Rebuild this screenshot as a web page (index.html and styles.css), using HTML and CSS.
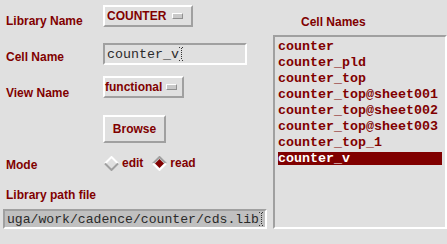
FILE: index.html
```html
<!DOCTYPE html>
<html lang="en">
<head>
  <meta charset="UTF-8" />
  <title>Open File</title>
  <link rel="stylesheet" href="styles.css">
</head>
<body>

  <div class="dialog">
    <div class="form">
      <div class="row row-lib">
        <span class="label">Library Name</span>
        <div class="menubtn menubtn-lib"><span>COUNTER</span><i class="indicator"></i></div>
      </div>

      <div class="row row-cell">
        <span class="label">Cell Name</span>
        <div class="entry">
          <span>counter_v</span>
          <svg class="caret" width="5" height="14" viewBox="0 0 5 14"><path d="M0 0.5h2M3 0.5h2M2.5 1v12M0 13.5h2M3 13.5h2" stroke="#333" stroke-width="1" stroke-dasharray="1 1" fill="none"/></svg>
        </div>
      </div>

      <div class="row row-view">
        <span class="label">View Name</span>
        <div class="menubtn menubtn-view"><span>functional</span><i class="indicator"></i></div>
      </div>

      <div class="row row-browse">
        <button class="btn">Browse</button>
      </div>

      <div class="row row-mode">
        <span class="label">Mode</span>
        <div class="radios">
          <svg class="radio" width="15" height="15" viewBox="0 0 15 15">
            <polyline points="1,7.5 7.5,1 14,7.5" stroke="#fff" stroke-width="2" fill="none"/>
            <polyline points="1,7.5 7.5,14 14,7.5" stroke="#a0a0a0" stroke-width="2" fill="none"/>
          </svg>
          <span class="radio-text">edit</span>
          <svg class="radio radio-on" width="15" height="15" viewBox="0 0 15 15">
            <polygon points="7.5,3 12,7.5 7.5,12 3,7.5" fill="#800000"/>
            <polyline points="1,7.5 7.5,1 14,7.5" stroke="#a0a0a0" stroke-width="2" fill="none"/>
            <polyline points="1,7.5 7.5,14 14,7.5" stroke="#fff" stroke-width="2" fill="none"/>
          </svg>
          <span class="radio-text">read</span>
        </div>
      </div>

      <div class="path-label label">Library path file</div>
      <div class="pathfield">
        <span>/home/user/juga/work/cadence/counter/cds.lib</span>
        <svg class="caret" width="5" height="14" viewBox="0 0 5 14"><path d="M0 0.5h2M3 0.5h2M2.5 1v12M0 13.5h2M3 13.5h2" stroke="#333" stroke-width="1" stroke-dasharray="1 1" fill="none"/></svg>
      </div>
    </div>

    <div class="cells">
      <div class="cells-title">Cell Names</div>
      <ul class="listbox">
        <li>counter</li>
        <li>counter_pld</li>
        <li>counter_top</li>
        <li>counter_top@sheet001</li>
        <li>counter_top@sheet002</li>
        <li>counter_top@sheet003</li>
        <li>counter_top_1</li>
        <li class="selected">counter_v</li>
      </ul>
    </div>
  </div>

</body>
</html>
```

FILE: styles.css
```css
body {
  margin: 0;
  background: #e0e0e0;
  font-family: "Liberation Sans", Arial, sans-serif;
  width: 447px;
  height: 244px;
  overflow: hidden;
}
.dialog {
  display: flex;
}
.form {
  width: 273px;
  flex: none;
}
.row {
  display: flex;
  align-items: flex-start;
}
.label {
  width: 97px;
  padding-left: 6px;
  flex: none;
  color: #800000;
  font-weight: bold;
  font-size: 12px;
  line-height: 14px;
}
.row-lib {
  margin-top: 5px;
}
.row-lib .label {
  padding-top: 9px;
}
.row-cell {
  margin-top: 15px;
}
.row-cell .label {
  padding-top: 7px;
}
.row-view {
  margin-top: 11px;
}
.row-view .label {
  padding-top: 10px;
}
.row-browse {
  margin-top: 15px;
  padding-left: 103px;
}
.row-mode {
  margin-top: 12px;
  height: 16px;
}
.row-mode .label {
  padding-top: 3px;
}

/* raised menu buttons */
.menubtn {
  box-sizing: border-box;
  height: 22px;
  display: flex;
  align-items: center;
  border: 2px solid;
  border-color: #fff #a0a0a0 #a0a0a0 #fff;
  color: #800000;
  font-weight: bold;
  font-size: 12px;
}
.menubtn-lib {
  width: 90px;
  padding-left: 2px;
}
.menubtn-lib .indicator {
  margin-left: 6px;
}
.menubtn-view {
  width: 81px;
  padding-left: 0;
}
.menubtn-view .indicator {
  margin-left: 4px;
}
.indicator {
  box-sizing: border-box;
  width: 11px;
  height: 6px;
  border: 1px solid;
  border-color: #fff #909090 #909090 #fff;
  background: #c8c8c8;
}

/* sunken entries */
.entry {
  box-sizing: border-box;
  width: 144px;
  height: 22px;
  display: flex;
  align-items: center;
  padding-left: 2px;
  border: 2px solid;
  border-color: #a0a0a0 #fff #fff #a0a0a0;
  font-family: "Liberation Mono", monospace;
  font-size: 13.33px;
  color: #2a2a2a;
}
.caret {
  flex: none;
}

.btn {
  box-sizing: border-box;
  width: 63px;
  height: 28px;
  padding: 0;
  background: #e0e0e0;
  border: 2px solid;
  border-color: #fff #a0a0a0 #a0a0a0 #fff;
  color: #800000;
  font-family: "Liberation Sans", Arial, sans-serif;
  font-weight: bold;
  font-size: 12px;
}

.radios {
  display: flex;
  align-items: center;
  height: 16px;
  padding-left: 1px;
  color: #800000;
  font-weight: bold;
  font-size: 12px;
}
.radio-text {
  margin-left: 3px;
}
.radio-on {
  margin-left: 9px;
}

.path-label {
  width: auto;
  margin-top: 17px;
}
.pathfield {
  box-sizing: border-box;
  width: 264px;
  height: 20px;
  margin: 7px 0 0 3px;
  display: flex;
  justify-content: flex-end;
  align-items: center;
  padding-right: 1px;
  overflow: hidden;
  white-space: nowrap;
  background: #c0c0c0;
  border: 2px solid;
  border-color: #a0a0a0 #fff #fff #a0a0a0;
  font-family: "Liberation Mono", monospace;
  font-size: 13.13px;
  color: #2a2a2a;
}
.pathfield span {
  flex: none;
}

/* cell list */
.cells {
  flex: none;
}
.cells-title {
  padding: 15px 0 0 28px;
  color: #800000;
  font-weight: bold;
  font-size: 12px;
  line-height: 14px;
}
.listbox {
  box-sizing: border-box;
  width: 174px;
  height: 194px;
  margin: 6px 0 0;
  padding: 3px 3px 0;
  list-style: none;
  border: 2px solid;
  border-color: #a0a0a0 #fff #fff #a0a0a0;
  font-family: "Liberation Mono", monospace;
  font-weight: bold;
  font-size: 13.33px;
  color: #800000;
}
.listbox li {
  height: 13px;
  line-height: 13px;
  margin-bottom: 3px;
  white-space: nowrap;
}
.listbox li.selected {
  background: #800000;
  color: #fff;
}
```
